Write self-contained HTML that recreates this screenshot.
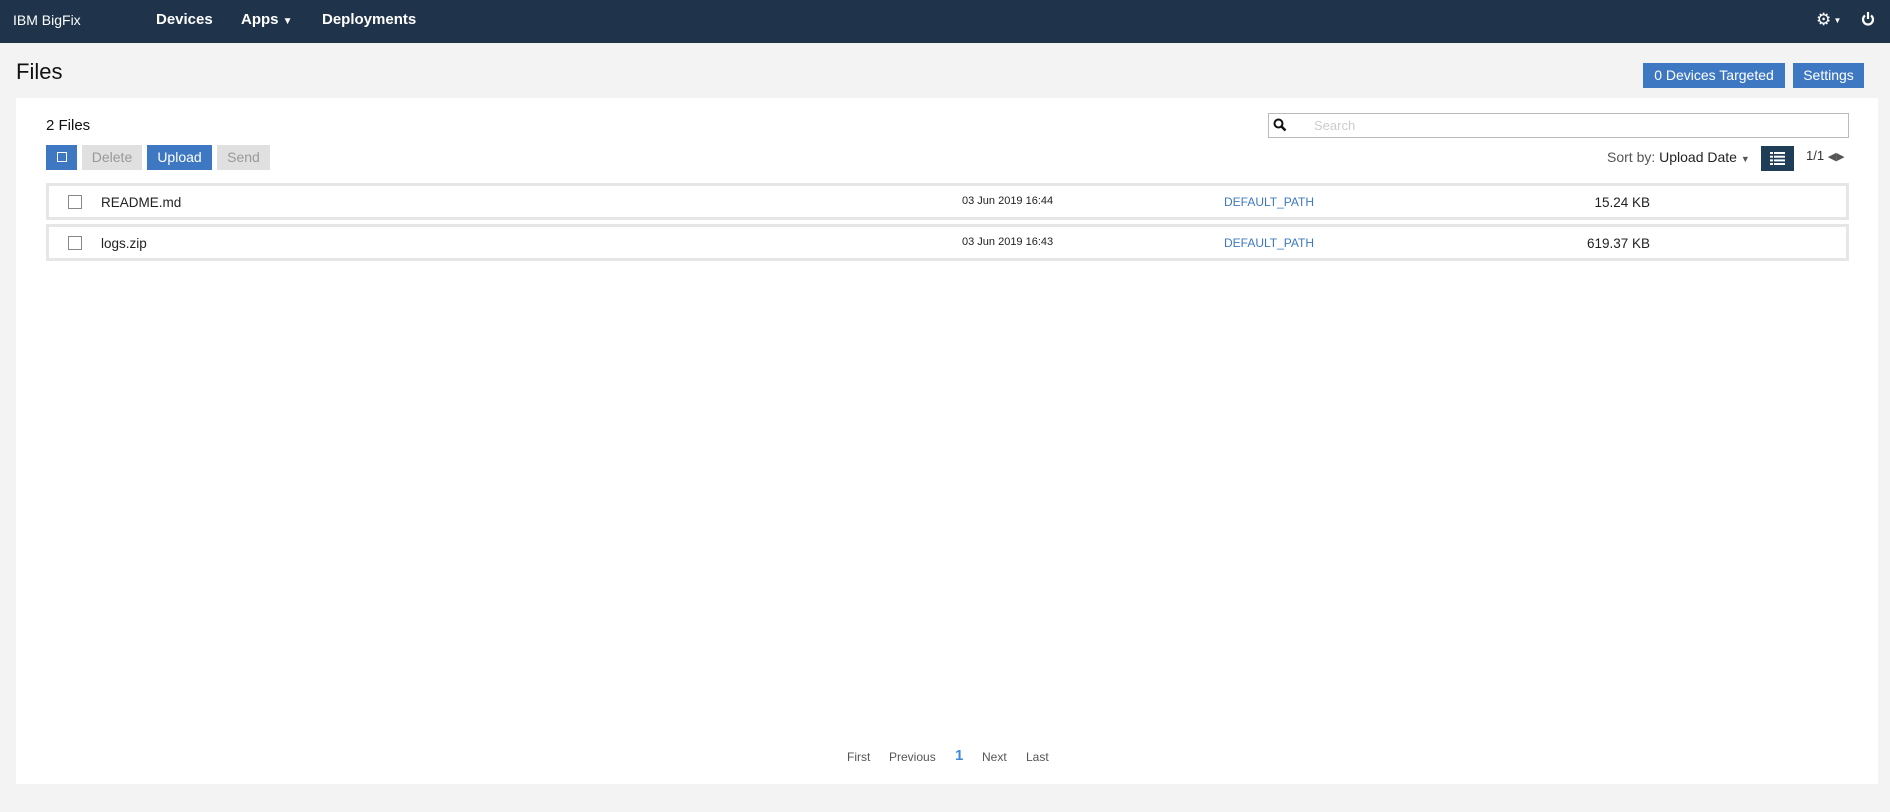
<!DOCTYPE html>
<html><head><meta charset="utf-8"><style>
*{box-sizing:border-box;margin:0;padding:0}
body{width:1890px;height:812px;background:#f3f3f3;font-family:"Liberation Sans",Arial,sans-serif;position:relative;overflow:hidden;color:#222}
.nav{position:absolute;left:0;top:0;width:1890px;height:43px;background:#1f344b;color:#fff}
.nav span{position:absolute;top:11px;font-size:15px}
.a{position:absolute}
.btn{position:absolute;color:#fff;background:#3e78c2;font-size:14px;text-align:center}
.dis{background:#e0e0e0;color:#999}
.panel{position:absolute;left:16px;top:98px;width:1862px;height:686px;background:#fff}
.row{position:absolute;left:46px;width:1803px;height:37px;border:3px solid #e6e6e6;font-size:13.5px}
.row div{position:absolute;top:9px}
.cb{width:14px;height:14px;border:1px solid #888;left:19px;top:9px!important}
.pg{position:absolute;top:750px;font-size:12px;color:#555}
</style></head><body>
<div class="nav">
<span style="left:13px;font-size:14px;top:12px">IBM BigFix</span>
<span style="left:156px;font-weight:bold">Devices</span>
<span style="left:241px;font-weight:bold">Apps <span style="position:static;font-size:10px">▼</span></span>
<span style="left:322px;font-weight:bold">Deployments</span>
<span style="left:1816px;top:10px;font-size:17px">⚙<span style="position:static;font-size:8px;vertical-align:middle"> ▼</span></span>
<svg class="a" style="left:1861px;top:11px" width="14" height="16" viewBox="0 0 14 16"><path d="M4 4.5A5 5 0 1 0 10 4.5" fill="none" stroke="#fff" stroke-width="2.2"/><line x1="7" y1="1" x2="7" y2="8" stroke="#fff" stroke-width="2.2"/></svg>
</div>
<div class="a" style="left:16px;top:59px;font-size:22px;color:#111">Files</div>
<div class="btn" style="left:1643px;top:63px;width:142px;height:25px;line-height:25px">0 Devices Targeted</div>
<div class="btn" style="left:1793px;top:63px;width:71px;height:25px;line-height:25px">Settings</div>
<div class="panel"></div>
<div class="a" style="left:46px;top:117px;font-size:15px;color:#111">2 Files</div>
<div class="btn" style="left:46px;top:145px;width:31px;height:25px"><div style="width:10px;height:10px;border:1.5px solid #fff;margin:7px auto"></div></div>
<div class="btn dis" style="left:82px;top:145px;width:60px;height:25px;line-height:25px">Delete</div>
<div class="btn" style="left:147px;top:145px;width:65px;height:25px;line-height:25px">Upload</div>
<div class="btn dis" style="left:217px;top:145px;width:53px;height:25px;line-height:25px">Send</div>
<div class="a" style="left:1268px;top:113px;width:581px;height:25px;border:1px solid #bbb"></div>
<svg class="a" style="left:1273px;top:118px" width="14" height="14" viewBox="0 0 14 14"><circle cx="5.5" cy="5.5" r="4" fill="none" stroke="#111" stroke-width="2"/><line x1="8.5" y1="8.5" x2="12.5" y2="12.5" stroke="#111" stroke-width="2.5"/></svg>
<div class="a" style="left:1314px;top:118px;font-size:13px;color:#ccc">Search</div>
<div class="a" style="left:1607px;top:149px;font-size:14px;color:#555">Sort by: <span style="color:#222">Upload Date</span> <span style="font-size:9px">▼</span></div>
<div class="a" style="left:1761px;top:146px;width:33px;height:25px;background:#1f3d56"><svg style="margin:6px 9px" width="15" height="13" viewBox="0 0 15 13"><g fill="#fff"><rect x="0" y="0" width="3" height="2"/><rect x="4" y="0" width="11" height="2"/><rect x="0" y="3.7" width="3" height="2"/><rect x="4" y="3.7" width="11" height="2"/><rect x="0" y="7.4" width="3" height="2"/><rect x="4" y="7.4" width="11" height="2"/><rect x="0" y="11" width="3" height="2"/><rect x="4" y="11" width="11" height="2"/></g></svg></div>
<div class="a" style="left:1806px;top:148px;font-size:13px;color:#333">1/1 <span style="font-size:11px;color:#555">◀▶</span></div>
<div class="row" style="top:183px"><div class="cb"></div><div style="left:52px">README.md</div><div style="left:913px;font-size:11px">03 Jun 2019 16:44</div><div style="left:1175px;font-size:12px;color:#3e78c2">DEFAULT_PATH</div><div style="right:196px">15.24 KB</div></div>
<div class="row" style="top:224px"><div class="cb"></div><div style="left:52px">logs.zip</div><div style="left:913px;font-size:11px">03 Jun 2019 16:43</div><div style="left:1175px;font-size:12px;color:#3e78c2">DEFAULT_PATH</div><div style="right:196px">619.37 KB</div></div>
<div class="pg" style="left:847px">First</div>
<div class="pg" style="left:889px">Previous</div>
<div class="pg" style="left:955px;top:747px;font-size:15px;font-weight:bold;color:#3e8ad6">1</div>
<div class="pg" style="left:982px">Next</div>
<div class="pg" style="left:1026px">Last</div>
</body></html>
